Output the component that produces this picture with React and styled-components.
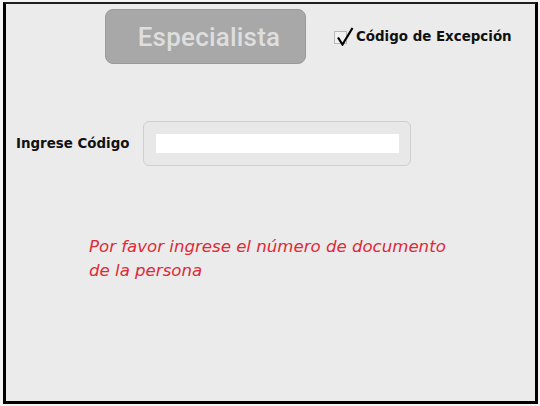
import React from "react";
import styled, { createGlobalStyle } from "styled-components";

const GlobalStyle = createGlobalStyle`
  html, body {
    margin: 0;
    padding: 0;
    background: #f4f4f4;
  }
`;

const Frame = styled.div`
  box-sizing: border-box;
  margin: 2px 0 0 3px;
  width: 535px;
  height: 402px;
  background: #ebebeb;
  border-top: 2px solid #1e1e1e;
  border-left: 3px solid #000;
  border-right: 3px solid #000;
  border-bottom: 3px solid #000;
  font-family: "DejaVu Sans", Verdana, sans-serif;
`;

const Header = styled.div`
  display: flex;
  align-items: center;
  padding: 5px 0 0 99px;
  gap: 28px;
`;

const ModeButton = styled.button`
  box-sizing: border-box;
  width: 201px;
  height: 55px;
  padding: 0 0 0 7px;
  border: 1px solid #9a9a9a;
  border-radius: 8px;
  background: #a8a8a8;
  color: #dedede;
  font-family: Roboto, "Liberation Sans", sans-serif;
  font-size: 26px;
  font-weight: 500;
  letter-spacing: 0.2px;
  cursor: default;
`;

const CheckLabel = styled.label`
  display: flex;
  align-items: center;
  gap: 9px;
  font-size: 13.4px;
  font-weight: bold;
  color: #111;
`;

const CheckBox = styled.span`
  position: relative;
  box-sizing: border-box;
  width: 13px;
  height: 13px;
  border: 1px solid #b8b8b8;
  background: #f2f2f2;
  margin-top: 2px;

  svg {
    position: absolute;
    left: 1px;
    top: -5px;
  }
`;

const CodeRow = styled.div`
  display: flex;
  align-items: center;
  margin-top: 57px;
  padding-left: 10px;
`;

const FieldLabel = styled.span`
  width: 127px;
  font-size: 13.4px;
  font-weight: bold;
  color: #111;
`;

const FieldBox = styled.div`
  box-sizing: border-box;
  width: 268px;
  height: 45px;
  padding: 12px 12px 0 12px;
  border: 1px solid #cfcfcf;
  border-radius: 6px;
  background: #e8e8e8;
`;

const CodeInput = styled.input`
  box-sizing: border-box;
  display: block;
  width: 243px;
  height: 19px;
  border: none;
  background: #fff;
  outline: none;
`;

const Message = styled.p`
  margin: 69px 0 0 83px;
  width: 420px;
  font-size: 16.6px;
  font-style: italic;
  line-height: 24px;
  color: #dd2a35;
`;

const CheckMark = () => (
  <svg width="18" height="19" viewBox="0 0 18 19">
    <polyline
      points="2,10.5 6.5,17.5 16.5,1"
      fill="none"
      stroke="#000"
      strokeWidth="2.2"
      strokeLinejoin="miter"
    />
  </svg>
);

export default function App() {
  return (
    <>
      <GlobalStyle />
      <Frame>
        <Header>
          <ModeButton disabled>Especialista</ModeButton>
          <CheckLabel>
            <CheckBox>
              <CheckMark />
            </CheckBox>
            Código de Excepción
          </CheckLabel>
        </Header>
        <CodeRow>
          <FieldLabel>Ingrese Código</FieldLabel>
          <FieldBox>
            <CodeInput type="text" />
          </FieldBox>
        </CodeRow>
        <Message>
          Por favor ingrese el número de documento
          <br />
          de la persona
        </Message>
      </Frame>
    </>
  );
}
